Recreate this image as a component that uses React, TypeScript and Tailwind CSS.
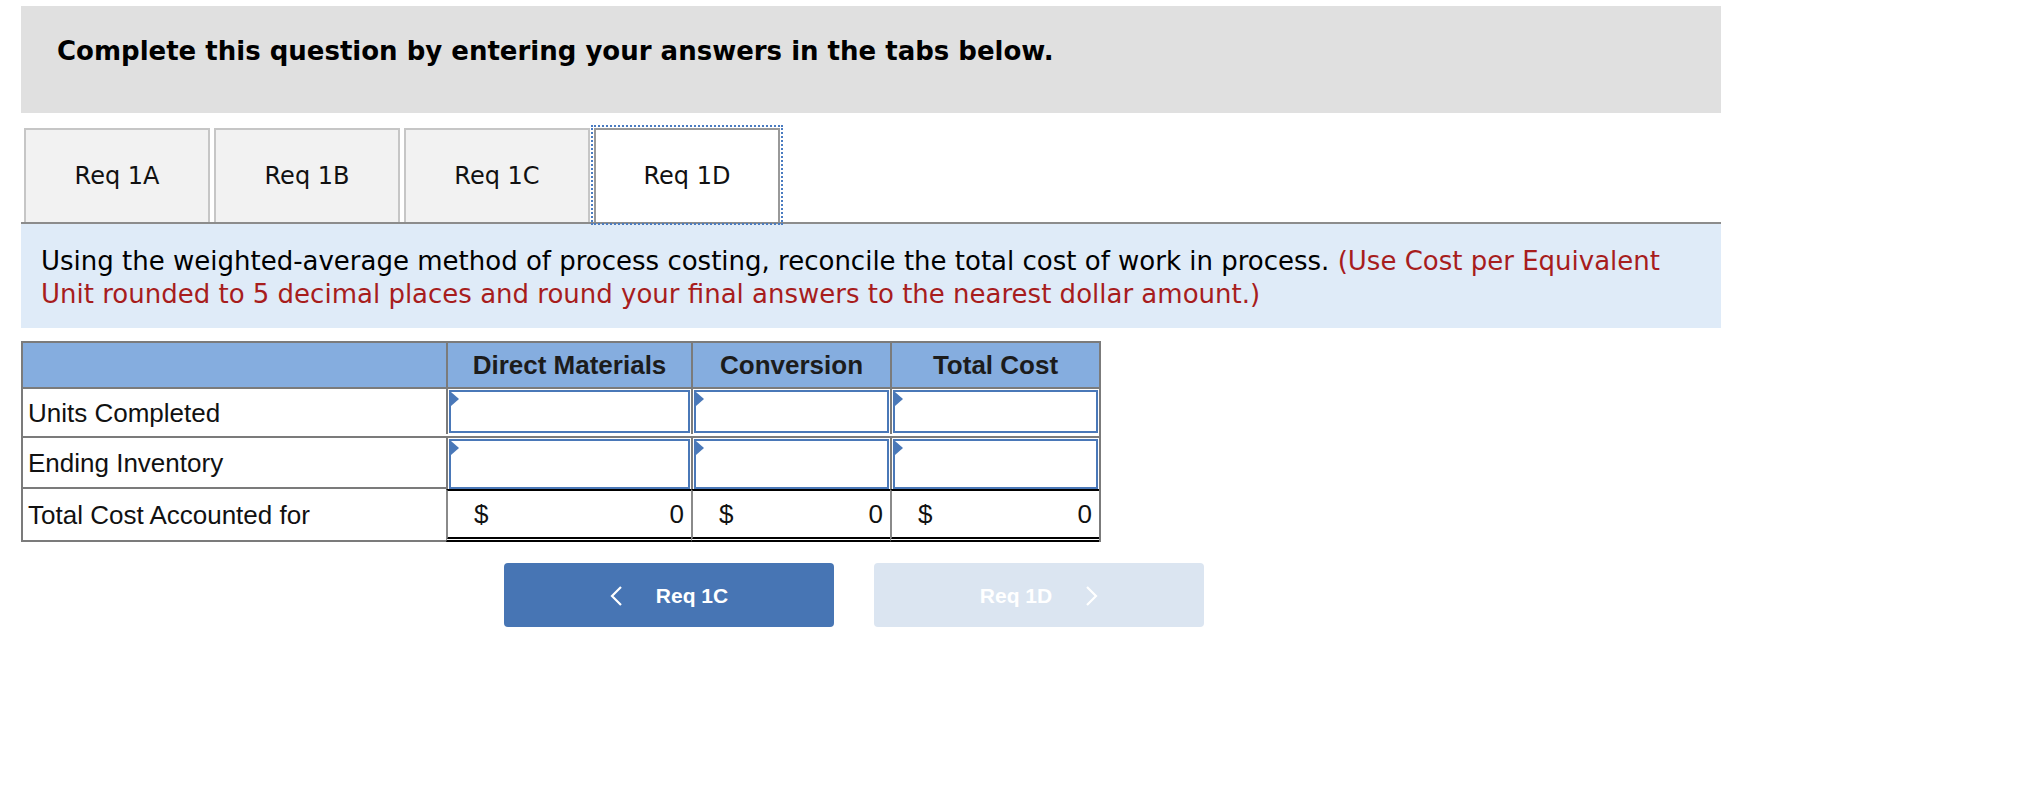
import React from "react";

const tabs = ["Req 1A", "Req 1B", "Req 1C", "Req 1D"];
const columns = ["Direct Materials", "Conversion", "Total Cost"];
const grid = "grid grid-cols-[423px_245px_199px_209px]";

function EntryCell({ last }: { last?: boolean }) {
  return (
    <div className={`border-l-2 border-[#7b7b7b] px-[1px] pt-[1px] ${last ? "" : "pb-[1px]"}`}>
      <div className="relative h-full w-full border-2 border-[#4a78b8] bg-white">
        <svg
          className="absolute left-0 top-0"
          width="8"
          height="14"
          viewBox="0 0 8 14"
          aria-hidden="true"
        >
          <polygon points="0,0 8,7 0,14" fill="#4a78b8" />
        </svg>
        <input type="text" className="h-full w-full bg-transparent outline-none" aria-label="answer" />
      </div>
    </div>
  );
}

function Chevron({ dir }: { dir: "left" | "right" }) {
  return (
    <svg width="13" height="20" viewBox="0 0 13 20" aria-hidden="true">
      <polyline
        points={dir === "left" ? "11,1 2,10 11,19" : "2,1 11,10 2,19"}
        fill="none"
        stroke="white"
        strokeWidth="2.2"
      />
    </svg>
  );
}

export default function App() {
  return (
    <div className="min-h-[804px] w-[2028px] bg-white pl-[21px] pt-[6px]">
      <div className="w-[1700px]">
        {/* Heading */}
        <div className="h-[107px] bg-[#e0e0e0] pl-[36px] pt-[29px]">
          <h1 className="font-['DejaVu_Sans',sans-serif] text-[26px] font-bold leading-[32px] text-black">
            Complete this question by entering your answers in the tabs below.
          </h1>
        </div>

        {/* Tabs */}
        <div className="mt-[15px] flex gap-[4px] pl-[3px]">
          {tabs.map((t, i) => {
            const active = i === tabs.length - 1;
            return (
              <button
                key={t}
                type="button"
                className={
                  active
                    ? "relative flex h-[94px] w-[186px] items-center justify-center border-2 border-b-0 border-[#999999] bg-white font-['DejaVu_Sans',sans-serif] text-[24px] text-[#111]"
                    : "flex h-[94px] w-[186px] items-center justify-center border-2 border-b-0 border-[#c6c6c6] bg-[#f2f2f2] font-['DejaVu_Sans',sans-serif] text-[24px] text-[#111]"
                }
              >
                {active && (
                  <span className="absolute -bottom-[3px] -left-[5px] -right-[5px] -top-[5px] z-10 border-2 border-dotted border-[#4a7bc0]" />
                )}
                {t}
              </button>
            );
          })}
        </div>
        <div className="h-[2px] bg-[#8c8c8c]" />

        {/* Instructions */}
        <div className="bg-[#dfebf8] px-[20px] pb-[17px] pt-[21px] font-['DejaVu_Sans',sans-serif] text-[26px] leading-[33px] text-black">
          Using the weighted-average method of process costing, reconcile the total cost of work in process.{" "}
          <span className="text-[#a71d1d]">
            (Use Cost per Equivalent Unit rounded to 5 decimal places and round your final answers to the nearest dollar amount.)
          </span>
        </div>

        {/* Table */}
        <div className="mt-[13px] w-[1080px] border-x-2 border-t-2 border-[#7b7b7b] font-['Liberation_Sans',Arial,sans-serif] text-[26px] text-[#111]">
          <div className={grid}>
            <div className="h-[46px] border-b-2 border-[#7b7b7b] bg-[#85addf]" />
            {columns.map((c) => (
              <div
                key={c}
                className="flex h-[46px] items-center justify-center border-b-2 border-l-2 border-[#7b7b7b] bg-[#85addf] font-bold text-[#1c1c1c]"
              >
                {c}
              </div>
            ))}
          </div>

          <div className={`${grid} h-[49px]`}>
            <div className="flex items-center border-b-2 border-[#7b7b7b] pl-[5px] pt-[2px]">Units Completed</div>
            {columns.map((c) => (
              <div key={c} className="border-b-2 border-[#7b7b7b]">
                <div className="h-full">
                  <EntryCell />
                </div>
              </div>
            ))}
          </div>

          <div className={`${grid} h-[51px]`}>
            <div className="flex items-center border-b-2 border-[#7b7b7b] pl-[5px] pt-[2px]">Ending Inventory</div>
            {columns.map((c) => (
              <EntryCell key={c} last />
            ))}
          </div>

          <div className={`${grid} h-[53px]`}>
            <div className="flex items-center border-b-2 border-[#7b7b7b] pl-[5px] pt-[1px]">Total Cost Accounted for</div>
            {columns.map((c) => (
              <div
                key={c}
                className="flex items-center justify-between border-b-[5px] border-l-2 border-t-2 border-b-black border-l-[#8a8a8a] border-t-black border-double pl-[26px] pr-[7px]"
              >
                <span>$</span>
                <span>0</span>
              </div>
            ))}
          </div>
        </div>

        {/* Navigation */}
        <div className="ml-[483px] mt-[21px] flex gap-[40px] font-['Liberation_Sans',Arial,sans-serif] text-[21px] font-bold text-white">
          <button
            type="button"
            className="flex h-[64px] w-[330px] items-center justify-center gap-[33px] rounded-[4px] bg-[#4775b4] pt-[2px]"
          >
            <Chevron dir="left" />
            <span>Req 1C</span>
          </button>
          <button
            type="button"
            disabled
            className="flex h-[64px] w-[330px] items-center justify-center gap-[33px] rounded-[4px] bg-[#dbe5f1] pt-[2px]"
          >
            <span>Req 1D</span>
            <Chevron dir="right" />
          </button>
        </div>
      </div>
    </div>
  );
}
